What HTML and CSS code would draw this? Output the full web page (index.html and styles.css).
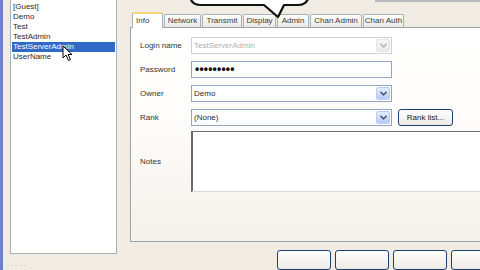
FILE: index.html
```html
<!DOCTYPE html>
<html>
<head>
<meta charset="utf-8">
<link rel="stylesheet" href="styles.css">
</head>
<body>
<div class="window">
  <div class="edge"></div>
  <div class="left">
    <ul class="list">
      <li>[Guest]</li>
      <li>Demo</li>
      <li>Test</li>
      <li>TestAdmin</li>
      <li class="sel">TestServerAdmin</li>
      <li>UserName</li>
    </ul>
    <div class="status">· · · · ·</div>
  </div>
  <div class="right">
    <div class="topbar"></div>
    <div class="tabs">
      <div class="tab active">Info</div>
      <div class="tab">Network</div>
      <div class="tab">Transmit</div>
      <div class="tab">Display</div>
      <div class="tab">Admin</div>
      <div class="tab">Chan Admin</div>
      <div class="tab">Chan Auth</div>
    </div>
    <div class="panel">
      <div class="row">
        <div class="label">Login name</div>
        <div class="field combo disabled">
          <span class="val">TestServerAdmin</span>
          <span class="arrow"><svg width="7" height="5" viewBox="0 0 7 5"><path d="M0.5 0.8 L3.5 3.8 L6.5 0.8" fill="none" stroke="#b8b8b8" stroke-width="1.6"/></svg></span>
        </div>
      </div>
      <div class="row">
        <div class="label">Password</div>
        <div class="field pass"><span class="dots">•••••••••</span></div>
      </div>
      <div class="row">
        <div class="label">Owner</div>
        <div class="field combo">
          <span class="val">Demo</span>
          <span class="arrow"><svg width="7" height="5" viewBox="0 0 7 5"><path d="M0.5 0.8 L3.5 3.8 L6.5 0.8" fill="none" stroke="#4d6185" stroke-width="1.6"/></svg></span>
        </div>
      </div>
      <div class="row rank">
        <div class="label">Rank</div>
        <div class="field combo">
          <span class="val">(None)</span>
          <span class="arrow"><svg width="7" height="5" viewBox="0 0 7 5"><path d="M0.5 0.8 L3.5 3.8 L6.5 0.8" fill="none" stroke="#4d6185" stroke-width="1.6"/></svg></span>
        </div>
        <div class="btn ranklist">Rank list...</div>
      </div>
      <div class="row notes">
        <div class="label">Notes</div>
        <div class="textarea"></div>
      </div>
    </div>
    <div class="buttons">
      <div class="btn bottom"></div>
      <div class="btn bottom"></div>
      <div class="btn bottom"></div>
      <div class="btn bottom"></div>
    </div>
  </div>
  <svg class="callout" width="480" height="30" viewBox="0 0 480 30">
    <path d="M190 -4 Q191 5 201 5 L264 5 L278 17 L284 5 L298 5 Q307 5 309 -4 Z" fill="#fff" stroke="#111" stroke-width="2.2" stroke-linejoin="round"/>
  </svg>
  <svg class="cursor" width="12" height="18" viewBox="0 0 12 18">
    <path d="M1 1 L1 13 L4 10 L6.5 15.5 L8.5 14.5 L6 9.5 L10 9.5 Z" fill="#fff" stroke="#000" stroke-width="1" stroke-linejoin="round"/>
  </svg>
</div>
</body>
</html>
```
FILE: styles.css
```css
html, body {
  margin: 0;
  padding: 0;
}
body {
  width: 480px;
  height: 270px;
  overflow: hidden;
  background: #f0ece4;
  font-family: "Liberation Sans", Arial, sans-serif;
  font-size: 8px;
  color: #2a2a2a;
}
.window {
  display: flex;
  width: 480px;
  height: 270px;
  position: relative;
  overflow: hidden;
}
.edge {
  width: 3px;
  flex: none;
  background: #6c82c8;
}
.left {
  width: 120px;
  flex: none;
  padding-left: 7px;
  display: flex;
  flex-direction: column;
}
.list {
  box-sizing: border-box;
  width: 107px;
  height: 255px;
  margin: 0;
  padding: 2px 1px 0 1px;
  list-style: none;
  background: #fff;
  border: 1px solid #a9b1ba;
  border-top: none;
}
.list li {
  height: 10px;
  line-height: 10px;
  padding-left: 1px;
  white-space: nowrap;
}
.list li.sel {
  background: #3169c6;
  color: #fff;
}
.status {
  margin-top: 8px;
  margin-left: -3px;
  color: #b5b0a8;
  font-size: 7px;
  line-height: 8px;
}
.right {
  flex: 1;
  min-width: 0;
  display: flex;
  flex-direction: column;
}
.topbar {
  height: 2px;
  margin-left: 245px;
  background: #b4b8bf;
}
.tabs {
  display: grid;
  grid-template-columns: 31px 37px 40px 33px 32px 52px 41px;
  column-gap: 1px;
  margin-top: 10px;
  margin-left: 2px;
  align-items: end;
  position: relative;
  z-index: 1;
}
.tab {
  box-sizing: border-box;
  height: 13px;
  line-height: 12px;
  text-align: center;
  white-space: nowrap;
  overflow: hidden;
  border: 1px solid #a6b2ba;
  border-bottom: none;
  border-radius: 2px 2px 0 0;
  background: linear-gradient(#fefefe, #ebeae4);
  color: #3a3a3a;
}
.tab.active {
  height: 16px;
  margin-bottom: -1px;
  line-height: 13px;
  text-align: left;
  padding-left: 3px;
  background: #fff;
  border-top: 2px solid #f7d27a;
}
.panel {
  box-sizing: border-box;
  height: 230px;
  border: 1px solid #9aa3a8;
  border-right: none;
  background: linear-gradient(#ffffff 0%, #fdfcfa 45%, #f5f1ec 100%);
  padding: 9px 0 0 9px;
}
.row {
  display: flex;
  align-items: center;
  height: 17px;
  margin-bottom: 7px;
}
.row.rank {
  margin-bottom: 5px;
}
.row.notes {
  height: 61px;
  margin-bottom: 0;
}
.label {
  width: 51px;
  flex: none;
  white-space: nowrap;
  color: #333;
}
.field {
  box-sizing: border-box;
  width: 201px;
  height: 17px;
  flex: none;
  border: 1px solid #8fa8c2;
  background: #fff;
  display: flex;
  align-items: center;
  padding-left: 2px;
}
.field .val {
  white-space: nowrap;
}
.field.disabled {
  border-color: #cbd3da;
  color: #b0b0b0;
}
.arrow {
  margin-left: auto;
  margin-right: 1px;
  width: 14px;
  height: 13px;
  box-sizing: border-box;
  border: 1px solid #bccdf4;
  border-radius: 2px;
  background: linear-gradient(#e3ebfd, #bacdf6);
  display: flex;
  align-items: center;
  justify-content: center;
}
.disabled .arrow {
  border-color: #e4e4e4;
  background: linear-gradient(#f6f6f6, #e9e9e9);
}
.pass {
  padding-left: 3px;
}
.dots {
  font-size: 12px;
  font-weight: bold;
  letter-spacing: 0.2px;
  color: #111;
  line-height: 10px;
}
.btn {
  box-sizing: border-box;
  border: 1px solid #1c3f6e;
  border-radius: 3px;
  background: linear-gradient(#ffffff, #eceae3);
  flex: none;
}
.ranklist {
  width: 55px;
  height: 17px;
  margin-left: 6px;
  line-height: 15px;
  text-align: center;
  white-space: nowrap;
  color: #222;
}
.textarea {
  flex: 1;
  height: 61px;
  box-sizing: border-box;
  background: #fff;
  border-top: 1px solid #6f6f6f;
  border-left: 2px solid #6a6a6a;
  border-bottom: 1px solid #d8d8d8;
}
.buttons {
  display: flex;
  gap: 4px;
  margin-top: 8px;
  padding-left: 147px;
}
.btn.bottom {
  width: 54px;
  height: 20px;
}
.callout {
  position: absolute;
  left: 0;
  top: 0;
  pointer-events: none;
  z-index: 5;
}
.cursor {
  position: absolute;
  left: 62px;
  top: 45px;
  z-index: 6;
}
```
